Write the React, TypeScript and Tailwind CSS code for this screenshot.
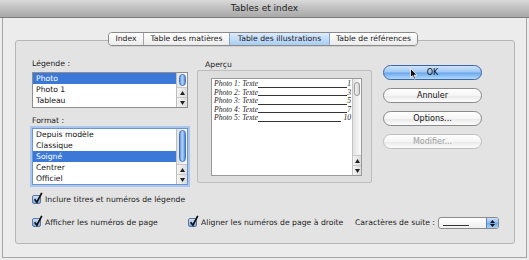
import React from "react";

function ScrollArrows() {
  return (
    <div className="flex flex-col">
      <div className="h-[10px] flex items-center justify-center border-t border-[#c9c9c9] bg-gradient-to-r from-[#f4f4f4] to-[#dcdcdc]">
        <svg width="5" height="4" viewBox="0 0 5 4"><path d="M2.5 0 L5 4 L0 4 Z" fill="#222" /></svg>
      </div>
      <div className="h-[10px] flex items-center justify-center border-t border-[#c9c9c9] bg-gradient-to-r from-[#f4f4f4] to-[#dcdcdc]">
        <svg width="5" height="4" viewBox="0 0 5 4"><path d="M0 0 L5 0 L2.5 4 Z" fill="#222" /></svg>
      </div>
    </div>
  );
}

function Thumb({ cls }: { cls: string }) {
  return (
    <div
      className={
        "absolute left-[2px] w-[7px] rounded-full border border-[#4272bd] bg-[linear-gradient(to_right,#5d93e0_0%,#b9d7fa_45%,#8ab8f2_70%,#4f85d6_100%)] " +
        cls
      }
    />
  );
}

function ListBox({
  items,
  selected,
  heightCls,
  thumbCls,
  focus,
}: {
  items: string[];
  selected: number;
  heightCls: string;
  thumbCls: string;
  focus?: boolean;
}) {
  return (
    <div
      className={
        "flex bg-white border " +
        heightCls +
        (focus
          ? " border-[#6c93d3] shadow-[0_0_0_2px_#a9c6ef]"
          : " border-[#8f8f8f]")
      }
    >
      <div className="flex-1 flex flex-col overflow-hidden">
        {items.map((it, i) => (
          <div
            key={it}
            className={
              "h-[11px] leading-[11px] pl-[3px] " +
              (i === selected ? "bg-[#3b78d8] text-white" : "text-[#111]")
            }
          >
            {it}
          </div>
        ))}
      </div>
      <div className="w-[11px] flex flex-col border-l border-[#bdbdbd] bg-gradient-to-r from-[#e2e2e2] to-[#fbfbfb]">
        <div className="relative flex-1">
          <Thumb cls={thumbCls} />
        </div>
        <ScrollArrows />
      </div>
    </div>
  );
}

function Check() {
  return (
    <span className="relative inline-block w-[9px] h-[9px] rounded-[2px] border border-[#5876a6] bg-gradient-to-b from-[#cfe0f7] to-[#7ea7df] shrink-0">
      <svg
        className="absolute -top-[4px] left-[0px]"
        width="10"
        height="12"
        viewBox="0 0 10 12"
      >
        <path d="M1.6 7.2 L3.9 10.2 L8.8 0.8" stroke="#101010" strokeWidth="1.7" fill="none" />
      </svg>
    </span>
  );
}

const previewRows = [
  ["Photo 1: Texte", "1"],
  ["Photo 2: Texte", "3"],
  ["Photo 3: Texte", "5"],
  ["Photo 4: Texte", "7"],
  ["Photo 5: Texte", "10"],
];

const whiteBtn =
  "h-[15px] w-full rounded-full border bg-[linear-gradient(to_bottom,#ffffff_0%,#f5f5f5_50%,#e8e8e8_52%,#fdfdfd_100%)] flex items-center justify-center leading-none";

export default function App() {
  return (
    <div className="relative w-[529px] h-[260px] bg-[#ececec] font-['DejaVu_Sans',sans-serif] text-[7.7px] text-[#1c1c1c] overflow-hidden flex flex-col">
      {/* title bar */}
      <div className="h-[18px] shrink-0 bg-[linear-gradient(to_bottom,#dadada_0%,#c4c4c4_40%,#a8a8a8_100%)] border-b border-[#7c7c7c] flex items-center justify-center text-[9px] text-[#222]">
        Tables et index
      </div>

      {/* body */}
      <div className="mx-[2px] h-[240px] border-x border-b border-[#a6a6a6] bg-[#ececec] pt-[14px] pl-[12px] pr-[11px]">
        {/* tabs */}
        <div className="relative z-10 -mb-[6px] ml-[93px] flex h-[14px] w-fit rounded-[4px] border border-[#8a8a8a] overflow-hidden shadow-[0_1px_0_rgba(0,0,0,0.08)]">
          <div className="w-[34px] flex items-center justify-center bg-gradient-to-b from-white to-[#ebebeb]">
            Index
          </div>
          <div className="w-[86px] flex items-center justify-center border-l border-[#a5a5a5] bg-gradient-to-b from-white to-[#ebebeb]">
            Table des matières
          </div>
          <div className="w-[100px] flex items-center justify-center border-l border-[#8aa6cf] bg-gradient-to-b from-[#dcebfc] to-[#a9cdf3]">
            Table des illustrations
          </div>
          <div className="w-[88px] flex items-center justify-center border-l border-[#8aa6cf] bg-gradient-to-b from-white to-[#ebebeb]">
            Table de références
          </div>
        </div>

        {/* group box */}
        <div className="h-[204px] rounded-[3px] border border-[#b5b5b5] bg-[#e3e3e3] pt-[17px] pl-[16px]">
          <div className="flex">
            {/* left column */}
            <div className="w-[156px] flex flex-col">
              <div className="h-[11px] leading-[11px]">Légende :</div>
              <div className="mt-[3px]">
                <ListBox
                  items={["Photo", "Photo 1", "Tableau"]}
                  selected={0}
                  heightCls="h-[36px]"
                  thumbCls="top-[1px] h-[12px]"
                />
              </div>
              <div className="mt-[7px] h-[11px] leading-[11px]">Format :</div>
              <div className="mt-[2px]">
                <ListBox
                  items={["Depuis modèle", "Classique", "Soigné", "Centrer", "Officiel"]}
                  selected={2}
                  heightCls="h-[57px]"
                  thumbCls="top-[1px] h-[32px]"
                  focus
                />
              </div>
            </div>

            {/* middle column */}
            <div className="ml-[9px] w-[175px] flex flex-col">
              <div className="mt-[2px] h-[10px] leading-[10px] pl-[8px]">Aperçu</div>
              <div className="h-[113px] rounded-[2px] border border-[#bdbdbd] bg-[#dedede] pt-[7px] pl-[13px] pr-[9px] pb-[6px]">
                <div className="h-full flex bg-white border border-[#9a9a9a]">
                  <div className="flex-1 pl-[2px] pr-[1px] pt-[1px] font-['Liberation_Serif',serif] italic text-[7.6px] text-[#1e1e1e]">
                    {previewRows.map(([t, n]) => (
                      <div key={t} className="flex items-end h-[8.6px] leading-[8.6px]">
                        <span className="whitespace-nowrap">{t}</span>
                        <span className="flex-1 h-px bg-[#333] mb-[1px]" />
                        <span className={n.length > 1 ? "pl-[2px]" : ""}>{n}</span>
                      </div>
                    ))}
                  </div>
                  <div className="w-[9px] flex flex-col border-l border-[#c4c4c4] bg-gradient-to-r from-[#e2e2e2] to-[#fbfbfb]">
                    <div className="relative flex-1">
                      <div className="absolute left-[1px] top-[3px] w-[6px] h-[14px] rounded-full border border-[#9a9a9a] bg-gradient-to-r from-[#f3f3f3] to-[#d5d5d5]" />
                    </div>
                    <ScrollArrows />
                  </div>
                </div>
              </div>
            </div>

            {/* right column */}
            <div className="ml-[11px] w-[99px] flex flex-col gap-[8px] pt-[7px] text-[8px]">
              <div className="relative h-[15px] w-full rounded-full border border-[#3d66a6] bg-[linear-gradient(to_bottom,#cfe3fb_0%,#9dc7f3_48%,#6aa6ec_52%,#b3dbfd_100%)] flex items-center justify-center leading-none text-[#111]">
                OK
                <svg className="absolute left-[26px] top-[2px]" width="8" height="12" viewBox="0 0 8 12">
                  <path d="M0.5 0.5 L0.5 9.5 L2.6 7.6 L4.2 11.2 L5.6 10.6 L4.1 7.1 L7 7.1 Z" fill="#111" stroke="#fff" strokeWidth="0.8" />
                </svg>
              </div>
              <div className={whiteBtn + " border-[#8a8a8a] text-[#111]"}>Annuler</div>
              <div className={whiteBtn + " border-[#8a8a8a] text-[#111]"}>Options...</div>
              <div className={whiteBtn + " border-[#bfbfbf] text-[#9d9d9d]"}>Modifier...</div>
            </div>
          </div>

          {/* checkbox rows */}
          <div className="mt-[9px] h-[11px] flex items-center">
            <Check />
            <span className="ml-[4px]">Inclure titres et numéros de légende</span>
          </div>
          <div className="mt-[12px] h-[12px] flex items-center">
            <div className="w-[156px] flex items-center">
              <Check />
              <span className="ml-[4px]">Afficher les numéros de page</span>
            </div>
            <div className="w-[167px] flex items-center">
              <Check />
              <span className="ml-[4px]">Aligner les numéros de page à droite</span>
            </div>
            <span>Caractères de suite :</span>
            <div className="ml-[3px] w-[61px] h-[12px] rounded-[3px] border border-[#8b8b8b] bg-gradient-to-b from-white to-[#efefef] flex overflow-hidden">
              <div className="flex-1 flex items-end pb-[2px] pl-[4px]">
                <div className="w-[26px] h-px bg-[#333]" />
              </div>
              <div className="w-[12px] border-l border-[#5b84c4] bg-[linear-gradient(to_bottom,#c9e0fa_0%,#8fbdf0_50%,#6fa6ea_52%,#aad4fb_100%)] flex flex-col items-center justify-center gap-[1px]">
                <svg width="5" height="3" viewBox="0 0 5 3"><path d="M2.5 0 L5 3 L0 3 Z" fill="#111" /></svg>
                <svg width="5" height="3" viewBox="0 0 5 3"><path d="M0 0 L5 0 L2.5 3 Z" fill="#111" /></svg>
              </div>
            </div>
          </div>
        </div>
      </div>
    </div>
  );
}
